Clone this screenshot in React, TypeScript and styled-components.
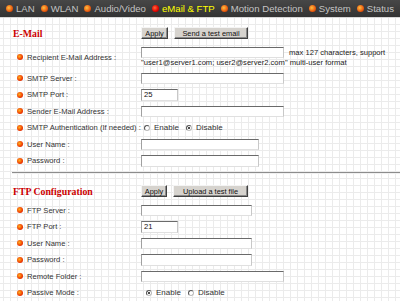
import React from "react";
import styled, { createGlobalStyle } from "styled-components";

const GlobalStyle = createGlobalStyle`
	html, body {
		margin: 0;
		padding: 0;
		height: 100%;
	}
	body {
		font-family: "Liberation Sans", Arial, sans-serif;
		background-color: #fff;
		background-image:
			linear-gradient(#ebebeb 1px, transparent 1px),
			linear-gradient(90deg, #ebebeb 1px, transparent 1px);
		background-size: 7px 7px;
		background-position: 3px 3px;
		overflow: hidden;
	}
`;

const NavBar = styled.div`
	display: flex;
	align-items: center;
	height: 17px;
	padding-left: 6px;
	background: linear-gradient(#474747, #333333);
	border-bottom: 1px solid #d8d8d8;
	gap: 6px;
`;

const NavItem = styled.div<{ $active?: boolean }>`
	display: flex;
	align-items: center;
	gap: 3px;
	font-size: 9.6px;
	color: ${(p) => (p.$active ? "#ffff00" : "#c4c4c4")};
	white-space: nowrap;
`;

const NavDot = styled.span<{ $active?: boolean }>`
	width: 7px;
	height: 7px;
	border-radius: 50%;
	background: ${(p) =>
		p.$active
			? "radial-gradient(circle at 40% 40%, #ff6a3a, #e00000 60%, #a00000)"
			: "radial-gradient(circle at 40% 40%, #ffc040, #e85a10 60%, #b03000)"};
`;

const Content = styled.div`
	padding: 4px 0 0 13px;
`;

const TitleRow = styled.div`
	display: grid;
	grid-template-columns: 128px 1fr;
	align-items: center;
	height: 22px;
`;

const Title = styled.h2`
	margin: 0;
	font-family: "Liberation Serif", "Times New Roman", serif;
	font-size: 9.8px;
	font-weight: bold;
	color: #cc0000;
`;

const ButtonGroup = styled.div`
	display: flex;
	gap: 6px;
`;

const Button = styled.button<{ $w: number }>`
	width: ${(p) => p.$w}px;
	height: 12px;
	padding: 0;
	font-family: "Liberation Sans", Arial, sans-serif;
	font-size: 7.4px;
	color: #111;
	background: #d6d3ce;
	border: 1px solid;
	border-color: #f4f4f4 #404040 #404040 #f4f4f4;
	box-shadow: inset -1px -1px 0 #8a8a8a;
`;

const Row = styled.div<{ $h?: number }>`
	display: grid;
	grid-template-columns: 128px 1fr;
	align-items: center;
	min-height: ${(p) => p.$h ?? 16.5}px;
`;

const LabelCell = styled.div`
	display: flex;
	align-items: center;
	gap: 4px;
	padding-left: 4px;
	font-size: 7.6px;
	color: #333;
	white-space: nowrap;
`;

const Dot = styled.span`
	width: 6px;
	height: 6px;
	border-radius: 50%;
	background: radial-gradient(circle at 40% 40%, #ffb020, #ee3a00 60%, #c01000);
	flex-shrink: 0;
`;

const FieldCell = styled.div`
	display: flex;
	flex-direction: column;
	justify-content: center;
`;

const FieldLine = styled.div`
	display: flex;
	align-items: center;
	gap: 5px;
`;

const TextInput = styled.div<{ $w: number }>`
	box-sizing: border-box;
	width: ${(p) => p.$w}px;
	height: 11.5px;
	background: #fff;
	border: 1px solid;
	border-color: #6a6a6a #c8c8c8 #e0e0e0 #a0a0a0;
	font-size: 7.6px;
	line-height: 9.5px;
	padding-left: 2px;
	color: #111;
`;

const Note = styled.span`
	font-size: 7.6px;
	color: #222;
	white-space: nowrap;
`;

const RadioGroup = styled.div<{ $offset: number }>`
	display: flex;
	align-items: center;
	padding-left: ${(p) => p.$offset}px;
	font-size: 8px;
	color: #333;
`;

const RadioOption = styled.label`
	display: flex;
	align-items: center;
	gap: 4px;
	margin-right: 7px;
`;

const Radio = styled.span<{ $checked?: boolean }>`
	position: relative;
	box-sizing: border-box;
	width: 6px;
	height: 6px;
	border-radius: 50%;
	border: 1px solid;
	border-color: #555 #bbb #bbb #555;
	background: #fff;
	&::after {
		content: "";
		display: ${(p) => (p.$checked ? "block" : "none")};
		position: absolute;
		left: 1px;
		top: 1px;
		width: 2px;
		height: 2px;
		border-radius: 50%;
		background: #111;
	}
`;

const Divider = styled.hr`
	margin: 3px 0 6px -1px;
	border: 0;
	border-top: 1px solid #8c8c8c;
	border-bottom: 1px solid #f0f0f0;
`;

type Field =
	| { kind: "input"; w: number; value?: string }
	| { kind: "radio"; on: boolean; offset: number; gap?: number };

const FieldRow = ({ label, field }: { label: string; field: Field }) => (
	<Row>
		<LabelCell>
			<Dot />
			{label}
		</LabelCell>
		<FieldCell>
			{field.kind === "input" ? (
				<TextInput $w={field.w}>{field.value}</TextInput>
			) : (
				<RadioGroup $offset={field.offset}>
					<RadioOption>
						<Radio $checked={field.on} />
						Enable
					</RadioOption>
					<RadioOption>
						<Radio $checked={!field.on} />
						Disable
					</RadioOption>
				</RadioGroup>
			)}
		</FieldCell>
	</Row>
);

const navItems = [
	"LAN",
	"WLAN",
	"Audio/Video",
	"eMail & FTP",
	"Motion Detection",
	"System",
	"Status",
];

const mailRows: { label: string; field: Field }[] = [
	{ label: "SMTP Server :", field: { kind: "input", w: 143 } },
	{ label: "SMTP Port :", field: { kind: "input", w: 37, value: "25" } },
	{ label: "Sender E-Mail Address :", field: { kind: "input", w: 143 } },
	{
		label: "SMTP Authentication (If needed) :",
		field: { kind: "radio", on: false, offset: 3 },
	},
	{ label: "User Name :", field: { kind: "input", w: 118 } },
	{ label: "Password :", field: { kind: "input", w: 118 } },
];

const ftpRows: { label: string; field: Field }[] = [
	{ label: "FTP Server :", field: { kind: "input", w: 111 } },
	{ label: "FTP Port :", field: { kind: "input", w: 37, value: "21" } },
	{ label: "User Name :", field: { kind: "input", w: 111 } },
	{ label: "Password :", field: { kind: "input", w: 111 } },
	{ label: "Remote Folder :", field: { kind: "input", w: 143 } },
	{ label: "Passive Mode :", field: { kind: "radio", on: true, offset: 5 } },
];

const App = () => (
	<>
		<GlobalStyle />
		<NavBar>
			{navItems.map((item) => (
				<NavItem key={item} $active={item === "eMail & FTP"}>
					<NavDot $active={item === "eMail & FTP"} />
					{item}
				</NavItem>
			))}
		</NavBar>
		<Content>
			<TitleRow>
				<Title>E-Mail</Title>
				<ButtonGroup>
					<Button $w={27}>Apply</Button>
					<Button $w={74}>Send a test email</Button>
				</ButtonGroup>
			</TitleRow>
			<Row $h={26}>
				<LabelCell>
					<Dot />
					Recipient E-Mail Address :
				</LabelCell>
				<FieldCell>
					<FieldLine>
						<TextInput $w={143} />
						<Note>max 127 characters, support</Note>
					</FieldLine>
					<Note>"user1@server1.com; user2@server2.com" multi-user format</Note>
				</FieldCell>
			</Row>
			{mailRows.map((r) => (
				<FieldRow key={"m" + r.label} label={r.label} field={r.field} />
			))}
			<Divider />
			<TitleRow>
				<Title>FTP Configuration</Title>
				<ButtonGroup>
					<Button $w={26}>Apply</Button>
					<Button $w={75}>Upload a test file</Button>
				</ButtonGroup>
			</TitleRow>
			{ftpRows.map((r) => (
				<FieldRow key={"f" + r.label} label={r.label} field={r.field} />
			))}
		</Content>
	</>
);

export default App;
